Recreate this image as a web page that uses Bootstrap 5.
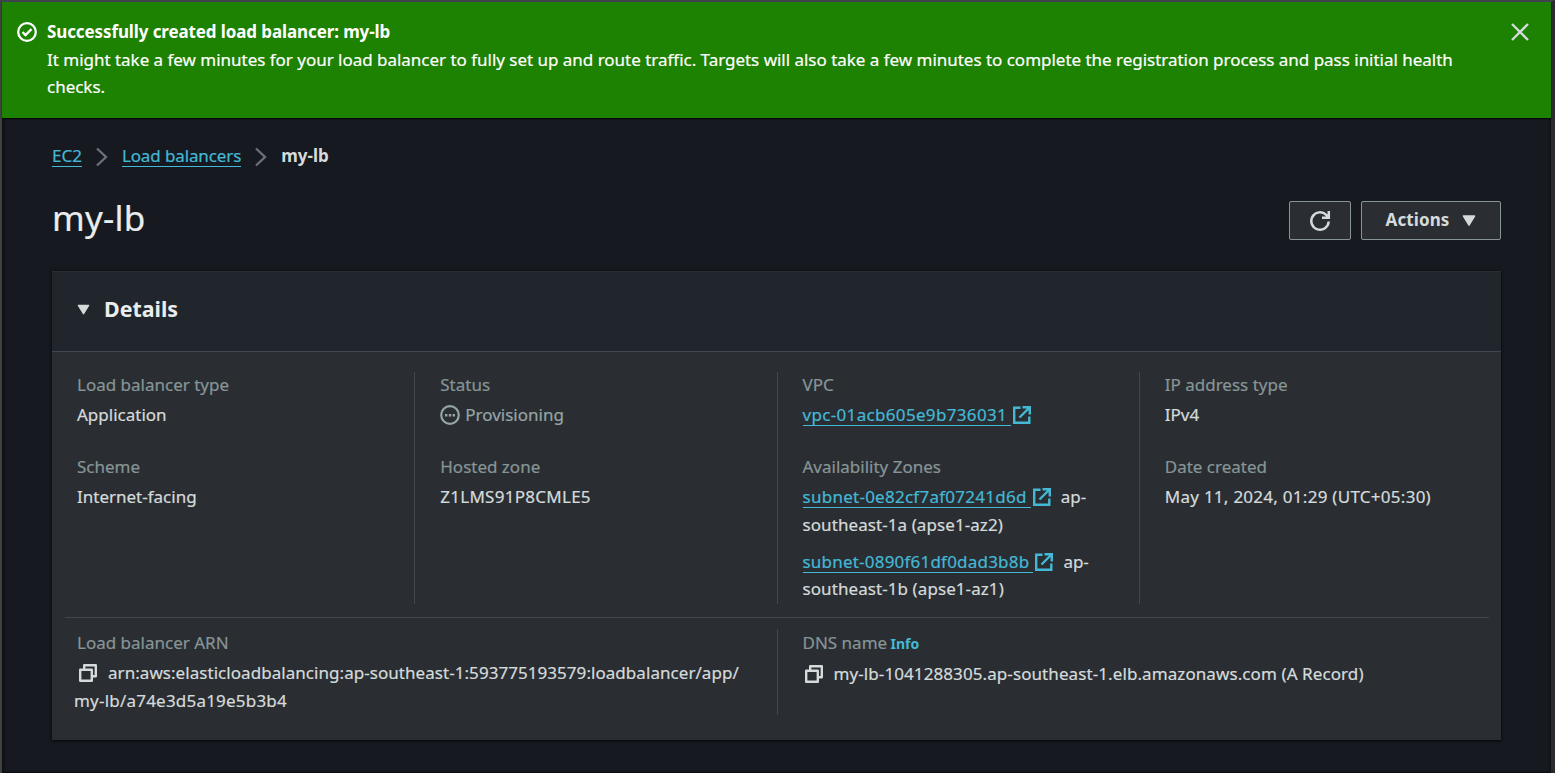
<!DOCTYPE html>
<html lang="en" data-bs-theme="dark">
<head>
<meta charset="utf-8">
<meta name="viewport" content="width=device-width, initial-scale=1">
<title>my-lb | Load balancers | EC2</title>
<link rel="stylesheet" href="https://cdn.jsdelivr.net/npm/bootstrap@5.3.0/dist/css/bootstrap.min.css">
<style>
  body{background:#161920;font-family:"Noto Sans",sans-serif;font-size:17px;line-height:27.5px;color:#d5dbdb;overflow:hidden;-webkit-text-stroke:.2px currentColor}
  .page-shell{height:773px;border-left:2px solid #414141;border-right:4px solid #2a2b2f;border-top:2px solid #41424f;box-shadow:inset 3px 0 2px -1px #0f1114,inset -2px 0 2px -1px #0f1114,inset 0 -2px 1px -1px #0b0d10}
  .flash{background:#1d8102;color:#fff;height:116px;padding:16px 20px 0 14px;gap:10px;box-shadow:0 1px 1px #06080a}
  .flash .flash-title{letter-spacing:-.11px}
  .flash .flash-text{letter-spacing:-.02px}
  svg{display:block;flex:none}
  a{color:#44b9d6;text-decoration:none}
  a .ul,.crumbs a{border-bottom:1px solid #44b9d6;line-height:21px;display:inline-block}
  .crumbs{padding:27px 0 0 50px;height:54px}
  .crumbs .crumb{line-height:21px}
  .crumbs svg{margin:-1px 8px 0}
  .main{padding:0 50px}
  h1{font-size:35px;font-weight:400;line-height:45px;color:#eaeded;letter-spacing:.2px}
  b,.fw-bold,h2,.btn,.hint{-webkit-text-stroke:0}
  .btn-aws{--bs-btn-color:#d5dbdb;--bs-btn-bg:#2a2e33;--bs-btn-border-color:#879596;--bs-btn-border-radius:2px;--bs-btn-font-weight:700;--bs-btn-font-size:17px;--bs-btn-line-height:27.5px;height:39px;--bs-btn-padding-y:0}
  .btn-aws .btn-label{margin-top:-2px;letter-spacing:.1px}
  .panel{background:#2a2e33;margin-top:31px;height:469px;box-shadow:0 1px 2px #08090c,0 0 2px #101216}
  .panel-head{background:#21252c;height:80px;border-top:1px solid #2a2e33;padding:0 25px 4px;gap:14px}
  .panel-head h2{font-size:21.4px;font-weight:700;color:#eaeded;line-height:28px;margin-bottom:2px}
  .panel-body{border-top:1px solid #414750}
  .cell{padding:0 24px 0 25px;min-width:0}
  .cell + .cell{border-left:1px solid #414750}
  .top-row{height:232px;margin-top:20px}
  .cell dt{font-weight:400;color:#879596;margin-bottom:2.5px;line-height:27.5px}
  .cell dd{margin-bottom:24.5px;line-height:27.5px}
  .cell dd:last-child{margin-bottom:0}
  .top-row dt:first-child{margin-top:-1px}
  .zone + .zone{margin-top:9.5px}
  .zone .ap{margin-left:9px}
  .rule{height:1px;background:#414750;margin:13px 12px 11px 13px}
  .bottom-row{height:86px}
  .wide{letter-spacing:.27px}
  .link-id{letter-spacing:.26px}
  .ext{display:inline-flex;vertical-align:top;gap:1px}
  .ext .ul{padding-right:4px;margin-top:4px;height:21px;line-height:19px}
  .ext svg{margin-top:4px}
  .hint{font-size:14px;font-weight:700}
</style>
</head>
<body>
<svg class="d-none">
  <symbol id="i-ext" viewBox="0 0 20 20"><path d="M8.500 2.700H2.200v15.100H17.300V11.500M10.500 2.200h7.300V9.500M17.500 2.500 7.500 12.500" fill="none" stroke="currentColor" stroke-width="2.400"/></symbol>
  <symbol id="i-copy" viewBox="0 0 20 20"><path d="M2.200 6.700h11.600v11.100H2.200zM6.200 6.500V2.200h11.600v11h-4" fill="none" stroke="currentColor" stroke-width="2.400" stroke-linejoin="round"/></symbol>
  <symbol id="i-tri" viewBox="0 0 14 11"><path d="M1.500 1h11L7 10z" fill="currentColor" stroke="currentColor" stroke-width="1.500" stroke-linejoin="round"/></symbol>
</svg>
<div class="page-shell">
  <div class="flash d-flex align-items-start" role="alert">
    <svg class="mt-1" width="21" height="21" viewBox="0 0 21 21" fill="none" stroke="#fff" stroke-width="2.300"><circle cx="11" cy="10" r="8.800"/><path d="m6.500 10.200 3 2.900 6-6"/></svg>
    <div class="flex-grow-1">
      <div class="fw-bold flash-title">Successfully created load balancer: my-lb</div>
      <div class="flash-text">It might take a few minutes for your load balancer to fully set up and route traffic. Targets will also take a few minutes to complete the registration process and pass initial health<br>checks.</div>
    </div>
    <svg style="margin-top:4px" width="22" height="20" viewBox="0 0 22 20" stroke="#d5dbdb" stroke-width="2.300"><path d="m3 2 16 16M19 2 3 18"/></svg>
  </div>

  <nav class="crumbs d-flex align-items-start">
    <a href="#">EC2</a>
    <svg width="24" height="24" viewBox="0 0 24 24" fill="none" stroke="#687078" stroke-width="2.400"><path d="m7 4.500 9 8.500-9 8.500"/></svg>
    <a href="#" style="letter-spacing:-.12px">Load balancers</a>
    <svg width="24" height="24" viewBox="0 0 24 24" fill="none" stroke="#687078" stroke-width="2.400"><path d="m7 4.500 9 8.500-9 8.500"/></svg>
    <span class="crumb fw-bold">my-lb</span>
  </nav>

  <main class="main">
    <div class="d-flex justify-content-between align-items-start">
      <h1 class="mb-0" style="margin-top:23px">my-lb</h1>
      <div class="d-flex" style="gap:10px;margin-top:29px">
        <button class="btn btn-aws d-flex align-items-center justify-content-center" style="width:62px" aria-label="Refresh">
          <svg width="22" height="22" viewBox="0 0 22 22" fill="none" stroke="currentColor" stroke-width="2.500"><path d="M19.700 11.500a8.700 8.700 0 1 1-2.500-6.600l2.200 2.300M19.800 1v6.700H13"/></svg>
        </button>
        <button class="btn btn-aws d-flex align-items-center justify-content-center" style="width:140px;gap:13px"><span class="btn-label">Actions</span> <svg width="14" height="11"><use href="#i-tri"/></svg></button>
      </div>
    </div>

    <section class="panel">
      <div class="panel-head d-flex align-items-center">
        <svg width="13" height="11"><use href="#i-tri"/></svg>
        <h2>Details</h2>
      </div>
      <div class="panel-body">
        <div class="row g-0 top-row">
          <dl class="col-3 cell mb-0">
            <dt>Load balancer type</dt><dd>Application</dd>
            <dt>Scheme</dt><dd>Internet-facing</dd>
          </dl>
          <dl class="col-3 cell mb-0">
            <dt>Status</dt>
            <dd class="d-flex align-items-center" style="gap:5px;color:#95a5a6"><svg width="20" height="20" viewBox="0 0 20 20"><circle cx="10" cy="10" r="8.800" fill="none" stroke="currentColor" stroke-width="2.200"/><path d="M5 9h2.400v2.400H5zM8.800 9h2.400v2.400H8.800zM12.600 9H15v2.400h-2.400z" fill="currentColor"/></svg>Provisioning</dd>
            <dt>Hosted zone</dt><dd class="wide">Z1LMS91P8CMLE5</dd>
          </dl>
          <dl class="col-3 cell mb-0">
            <dt>VPC</dt>
            <dd><a href="#" class="ext" style="letter-spacing:.33px"><span class="ul">vpc-01acb605e9b736031</span><svg width="20" height="20"><use href="#i-ext"/></svg></a></dd>
            <dt>Availability Zones</dt>
            <dd>
              <div class="zone"><a href="#" class="ext link-id"><span class="ul">subnet-0e82cf7af07241d6d</span><svg width="20" height="20"><use href="#i-ext"/></svg></a><span class="ap">ap-</span><br><span style="letter-spacing:.08px">southeast-1a (apse1-az2)</span></div>
              <div class="zone"><a href="#" class="ext link-id" style="letter-spacing:.21px"><span class="ul">subnet-0890f61df0dad3b8b</span><svg width="20" height="20"><use href="#i-ext"/></svg></a><span class="ap">ap-</span><br><span style="letter-spacing:.08px">southeast-1b (apse1-az1)</span></div>
            </dd>
          </dl>
          <dl class="col-3 cell mb-0">
            <dt>IP address type</dt><dd>IPv4</dd>
            <dt>Date created</dt><dd class="wide">May 11, 2024, 01:29 (UTC+05:30)</dd>
          </dl>
        </div>
        <div class="rule"></div>
        <div class="row g-0 bottom-row">
          <dl class="col-6 cell mb-0">
            <dt>Load balancer ARN</dt>
            <dd style="margin-left:-3px;letter-spacing:.05px"><span class="d-flex align-items-center" style="padding-left:4px;gap:10px"><svg width="20" height="20" style="margin-top:1px"><use href="#i-copy"/></svg>arn:aws:elasticloadbalancing:ap-southeast-1:593775193579:loadbalancer/app/</span><span style="letter-spacing:.21px">my-lb/a74e3d5a19e5b3b4</span></dd>
          </dl>
          <dl class="col-6 cell mb-0">
            <dt>DNS name <a href="#" class="hint" style="margin-left:-1px">Info</a></dt>
            <dd class="d-flex align-items-center" style="gap:10px;padding-left:1px;margin-top:-.5px;letter-spacing:.09px"><svg width="20" height="20" style="margin-top:1px"><use href="#i-copy"/></svg>my-lb-1041288305.ap-southeast-1.elb.amazonaws.com (A Record)</dd>
          </dl>
        </div>
      </div>
    </section>
  </main>
</div>
<script src="https://cdn.jsdelivr.net/npm/bootstrap@5.3.0/dist/js/bootstrap.bundle.min.js"></script>
</body>
</html>
